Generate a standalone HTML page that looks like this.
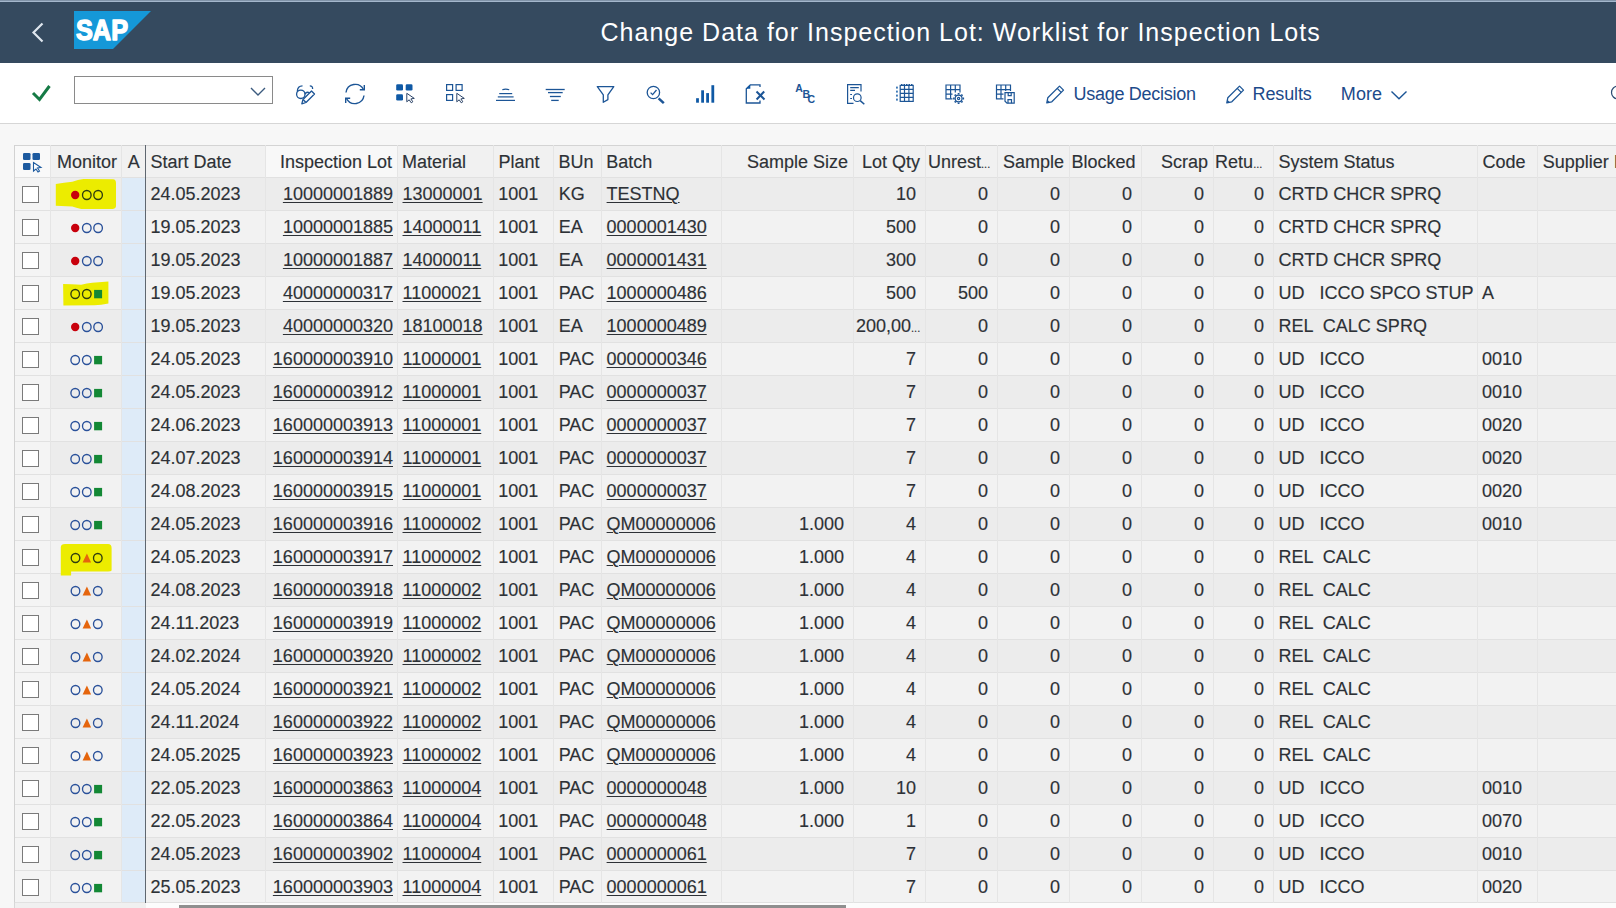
<!DOCTYPE html><html><head><meta charset="utf-8"><style>
*{margin:0;padding:0;box-sizing:border-box}
html,body{width:1616px;height:908px;overflow:hidden;background:#f7f7f7;font-family:"Liberation Sans", sans-serif;}
.a{position:absolute}
.t{position:absolute;font-size:18px;line-height:32px;height:32px;color:#2d3136;white-space:pre;-webkit-text-stroke:0.15px #2d3136}
.r{text-align:right}
.u{text-decoration:underline;text-underline-offset:2px;text-decoration-thickness:1px}
.h{line-height:31px;height:31px;top:147px}
.el{font-size:11px;letter-spacing:0px}
.tb{position:absolute;font-size:18px;color:#1c4a8a;white-space:pre;line-height:20px;}

</style></head><body>
<div class="a" style="left:0;top:0;width:1616px;height:1px;background:#8093a8"></div>
<div class="a" style="left:0;top:1px;width:1616px;height:1px;background:#a4b7cc"></div>
<div class="a" style="left:0;top:2px;width:1616px;height:61px;background:#354a5f"></div>
<svg class="a" style="left:0;top:0" width="200" height="62"><path d="M42.5 23.5 L33.5 32.5 L42.5 41.5" fill="none" stroke="#dfe6ee" stroke-width="2.2"/>
<path d="M74 11 H151 L113 49 H74 Z" fill="#1598d8"/>
<text x="76" y="40.3" font-family='"Liberation Sans", sans-serif' font-weight="bold" font-size="30" fill="#fff" stroke="#fff" stroke-width="1.5" stroke-linejoin="round" textLength="52" lengthAdjust="spacingAndGlyphs">SAP</text>
</svg>
<div class="a" style="left:600.5px;top:16px;font-size:25px;line-height:32px;color:#fff;letter-spacing:1.01px;white-space:pre">Change Data for Inspection Lot: Worklist for Inspection Lots</div>
<div class="a" style="left:0;top:63px;width:1616px;height:60px;background:#fff"></div>
<div class="a" style="left:0;top:123px;width:1616px;height:1px;background:#d6d6d6"></div>
<div class="a" style="left:74px;top:76px;width:199px;height:28px;border:1px solid #8a8a8a;background:#fff"></div>
<div class="tb" style="left:1073.5px;top:84px;letter-spacing:-0.28px">Usage Decision</div>
<div class="tb" style="left:1252.5px;top:84px;letter-spacing:-0.12px">Results</div>
<div class="tb" style="left:1340.8px;top:84px;letter-spacing:0.1px">More</div>

<svg class="a" style="left:0;top:0" width="1616" height="124">
<path d="M33 93 L39.5 99.5 L49.5 86" fill="none" stroke="#157a45" stroke-width="3"/>
<path d="M251 88 L258 95 L265 88" fill="none" stroke="#3b5a7e" stroke-width="1.4"/>
<!-- glasses pencil -->
<g fill="none" stroke="#1c5596" stroke-width="1.3">
<circle cx="300.8" cy="94.3" r="4.2"/><path d="M297.3 91.5 Q297.5 85.8 302.5 85.8"/><path d="M304.8 94.2 Q306.5 91.2 309.5 92.8"/><path d="M309.8 85.8 Q312.8 85.8 312.6 89"/>
<path d="M301.8 103.8 L303 99.5 L311.5 91 L314.5 94 L306 102.5 Z" stroke-linejoin="round"/><path d="M303.3 99.8 L305.8 102.3"/>
</g>
<!-- refresh -->
<g fill="none" stroke="#1c5596" stroke-width="1.4">
<path d="M346 92.5 A9.3 9.3 0 0 1 363.5 89.5"/><path d="M364 95.5 A9.3 9.3 0 0 1 346.5 98.5"/>
<path d="M359.8 89.8 L364.3 89.8 L364.3 85"/><path d="M350.2 98.2 L345.7 98.2 L345.7 103"/>
</g>
<!-- select all -->
<g fill="#0f59a5"><rect x="396.2" y="84.3" width="6.8" height="6.2" rx="1.3"/><rect x="405.7" y="84.3" width="6.8" height="6.2" rx="1.3"/><rect x="396.2" y="94.3" width="6.8" height="6.2" rx="1.3"/></g>
<path d="M406.8 93.3 L406.8 101.8 L409.2 99.8 L411.2 102.8 L412.8 101.8 L410.9 98.9 L414.3 98.4 Z" fill="#fff" stroke="#2c4468" stroke-width="1" stroke-linejoin="round"/>
<!-- deselect -->
<g fill="none" stroke="#1c5596" stroke-width="1.2"><rect x="446.6" y="84.6" width="6" height="5.8"/><rect x="456.1" y="84.6" width="6" height="5.8"/><rect x="446.6" y="94.6" width="6" height="5.8"/></g>
<path d="M456.8 93.3 L456.8 101.8 L459.2 99.8 L461.2 102.8 L462.8 101.8 L460.9 98.9 L464.3 98.4 Z" fill="#fff" stroke="#2c4468" stroke-width="1" stroke-linejoin="round"/>
<!-- align -->
<g fill="none" stroke="#1c5596" stroke-width="1.2"><path d="M502.3 89.8 Q505.7 88.6 509.2 89.8"/><path d="M499.2 93.6 H512.2"/><path d="M497.8 96.9 H513.6"/><path d="M496 100.4 H515"/></g>
<!-- sort -->
<g stroke="#1c5596" stroke-width="1.3"><path d="M545.7 89.5 H564.7"/><path d="M548 92.6 H562.7"/><path d="M549.9 96.5 H560.8"/><path d="M551.2 100.4 H558.7"/></g>
<!-- filter -->
<path d="M597.3 86.6 H613.8 L607.9 94.8 V99.6 L603.3 102.3 V94.8 Z" fill="none" stroke="#1c5596" stroke-width="1.3" stroke-linejoin="round"/>
<!-- find -->
<g fill="none" stroke="#1c5596"><circle cx="653.4" cy="92.5" r="6.2" stroke-width="1.3"/><path d="M650.6 92.6 L652.6 94.6 L656.5 90" stroke-width="1.3"/><path d="M658.6 98.3 L663.8 103.2" stroke-width="2.5"/></g>
<!-- bars -->
<g fill="#0f59a5"><rect x="696.1" y="98.2" width="2.8" height="4.5"/><rect x="701.2" y="90.3" width="2.8" height="12.4"/><rect x="706.2" y="93.1" width="2.8" height="9.6"/><rect x="711.4" y="85.2" width="2.8" height="17.5"/></g>
<!-- excel -->
<g fill="none" stroke="#1c5596" stroke-width="1.3"><path d="M760 87 V84.8 H750.3 L746.3 88.8 V103 H760 V100.5"/></g>
<path d="M746.3 88.8 L750.3 84.8 V88.8 Z" fill="#0f59a5"/>
<path d="M756.5 91.5 L764.5 99.5 M764.2 91.5 L756.6 99.5" stroke="#1c5596" stroke-width="2"/>
<!-- abc -->
<g font-family='"Liberation Sans", sans-serif' font-weight="bold" font-size="10.5" fill="#1c5596"><text x="795.2" y="92.3">A</text><text x="802.5" y="98.3">B</text><text x="807.6" y="103.4">C</text></g>
<!-- doc search -->
<g fill="none" stroke="#1c5596" stroke-width="1.2"><path d="M861 91.5 V84.6 H847.6 V103.3 H853.5"/><path d="M850.2 87.6 H858.8 M850.2 90.3 H855 M850.2 94.5 H852 M850.2 98.5 H852"/>
<circle cx="857.3" cy="97.7" r="3.8"/><path d="M860.2 100.6 L864.3 104.3" stroke-width="1.5"/></g>
<!-- grid -->
<g fill="none" stroke="#1c5596" stroke-width="1.2"><rect x="900.2" y="85.4" width="13" height="16"/><path d="M900.2 89.4 H913.2 M900.2 93.4 H913.2 M900.2 97.4 H913.2 M904.5 85.4 V101.4 M908.9 85.4 V101.4"/><path d="M901 84.6 H912.5" stroke-dasharray="1.5 1"/></g>
<g fill="#0f59a5"><rect x="896.2" y="86.6" width="1.5" height="2"/><rect x="896.2" y="90.6" width="1.5" height="2"/><rect x="896.2" y="94.6" width="1.5" height="2"/><rect x="896.2" y="98.6" width="1.5" height="2"/></g>
<!-- grid gear -->
<g fill="none" stroke="#1c5596" stroke-width="1.2"><path d="M952.5 98.8 H946 V85 H960 V92.5"/><path d="M946 89.6 H960 M946 94.2 H952.5 M950.6 85 V98.8 M955.3 85 V92.5"/>
<circle cx="958.6" cy="98.5" r="3.4"/><circle cx="958.6" cy="98.5" r="1.1"/></g>
<g stroke="#1c5596" stroke-width="1.8"><path d="M958.6 93 V94.6 M958.6 102.4 V104 M953.1 98.5 H954.7 M962.5 98.5 H964.1 M954.7 94.6 L955.8 95.7 M961.4 101.3 L962.5 102.4 M954.7 102.4 L955.8 101.3 M961.4 95.7 L962.5 94.6"/></g>
<!-- grid save -->
<g fill="none" stroke="#1c5596" stroke-width="1.2"><path d="M1003.5 98.8 H996.5 V85 H1010.5 V91"/><path d="M996.5 89.6 H1010.5 M996.5 94.2 H1003.5 M1001 85 V98.8 M1005.7 85 V91"/>
<path d="M1005 92.6 H1014.2 V103.2 H1007 L1005 101.2 Z"/><path d="M1008 103.2 V99.6 H1011.5 V103.2"/><path d="M1008.2 92.6 V95.6 H1011.2 V92.6"/></g>
<!-- pencil UD -->
<g fill="none" stroke="#1c5596" stroke-width="1.3" stroke-linejoin="round"><path d="M1046.8 102.8 L1047.8 97.8 L1059.5 86.1 L1063.5 90.1 L1051.8 101.8 Z"/><path d="M1057.2 88.4 L1061.2 92.4"/></g>
<path d="M1046.8 102.8 L1047.6 99.9 L1049.7 102 Z" fill="#1c5596"/>
<!-- pencil results -->
<g fill="none" stroke="#1c5596" stroke-width="1.3" stroke-linejoin="round"><path d="M1226.8 102.8 L1227.8 97.8 L1239.5 86.1 L1243.5 90.1 L1231.8 101.8 Z"/><path d="M1237.2 88.4 L1241.2 92.4"/></g>
<path d="M1226.8 102.8 L1227.6 99.9 L1229.7 102 Z" fill="#1c5596"/>
<!-- more chevron -->
<path d="M1391.5 91.5 L1399 98.8 L1406.5 91.5" fill="none" stroke="#1c5596" stroke-width="1.4"/>
<!-- partial circle right -->
<circle cx="1617.8" cy="92.5" r="6.3" fill="none" stroke="#2a4a72" stroke-width="1.2"/>
</svg>
<div class="a" style="left:14px;top:145px;width:1602px;height:758px;background:#f2f2f2"></div>
<div class="a" style="left:14px;top:145px;width:1602px;height:32px;background:#f1f1f1"></div>
<div class="a" style="left:15px;top:146px;width:35px;height:31px;background:#f9f9f9"></div>
<div class="a" style="left:266px;top:146px;width:131px;height:31px;background:#f8f8f8"></div>
<div class="a" style="left:51px;top:178px;width:1565px;height:32px;background:#ececec"></div>
<div class="a" style="left:15px;top:178px;width:35px;height:32px;background:#f4f4f4"></div>
<div class="a" style="left:122px;top:178px;width:23px;height:32px;background:#deebf8"></div>
<div class="a" style="left:51px;top:211px;width:1565px;height:32px;background:#f2f2f2"></div>
<div class="a" style="left:15px;top:211px;width:35px;height:32px;background:#f4f4f4"></div>
<div class="a" style="left:122px;top:211px;width:23px;height:32px;background:#deebf8"></div>
<div class="a" style="left:51px;top:244px;width:1565px;height:32px;background:#ececec"></div>
<div class="a" style="left:15px;top:244px;width:35px;height:32px;background:#f4f4f4"></div>
<div class="a" style="left:122px;top:244px;width:23px;height:32px;background:#deebf8"></div>
<div class="a" style="left:51px;top:277px;width:1565px;height:32px;background:#f2f2f2"></div>
<div class="a" style="left:15px;top:277px;width:35px;height:32px;background:#f4f4f4"></div>
<div class="a" style="left:122px;top:277px;width:23px;height:32px;background:#deebf8"></div>
<div class="a" style="left:51px;top:310px;width:1565px;height:32px;background:#ececec"></div>
<div class="a" style="left:15px;top:310px;width:35px;height:32px;background:#f4f4f4"></div>
<div class="a" style="left:122px;top:310px;width:23px;height:32px;background:#deebf8"></div>
<div class="a" style="left:51px;top:343px;width:1565px;height:32px;background:#f2f2f2"></div>
<div class="a" style="left:15px;top:343px;width:35px;height:32px;background:#f4f4f4"></div>
<div class="a" style="left:122px;top:343px;width:23px;height:32px;background:#deebf8"></div>
<div class="a" style="left:51px;top:376px;width:1565px;height:32px;background:#ececec"></div>
<div class="a" style="left:15px;top:376px;width:35px;height:32px;background:#f4f4f4"></div>
<div class="a" style="left:122px;top:376px;width:23px;height:32px;background:#deebf8"></div>
<div class="a" style="left:51px;top:409px;width:1565px;height:32px;background:#f2f2f2"></div>
<div class="a" style="left:15px;top:409px;width:35px;height:32px;background:#f4f4f4"></div>
<div class="a" style="left:122px;top:409px;width:23px;height:32px;background:#deebf8"></div>
<div class="a" style="left:51px;top:442px;width:1565px;height:32px;background:#ececec"></div>
<div class="a" style="left:15px;top:442px;width:35px;height:32px;background:#f4f4f4"></div>
<div class="a" style="left:122px;top:442px;width:23px;height:32px;background:#deebf8"></div>
<div class="a" style="left:51px;top:475px;width:1565px;height:32px;background:#f2f2f2"></div>
<div class="a" style="left:15px;top:475px;width:35px;height:32px;background:#f4f4f4"></div>
<div class="a" style="left:122px;top:475px;width:23px;height:32px;background:#deebf8"></div>
<div class="a" style="left:51px;top:508px;width:1565px;height:32px;background:#ececec"></div>
<div class="a" style="left:15px;top:508px;width:35px;height:32px;background:#f4f4f4"></div>
<div class="a" style="left:122px;top:508px;width:23px;height:32px;background:#deebf8"></div>
<div class="a" style="left:51px;top:541px;width:1565px;height:32px;background:#f2f2f2"></div>
<div class="a" style="left:15px;top:541px;width:35px;height:32px;background:#f4f4f4"></div>
<div class="a" style="left:122px;top:541px;width:23px;height:32px;background:#deebf8"></div>
<div class="a" style="left:51px;top:574px;width:1565px;height:32px;background:#ececec"></div>
<div class="a" style="left:15px;top:574px;width:35px;height:32px;background:#f4f4f4"></div>
<div class="a" style="left:122px;top:574px;width:23px;height:32px;background:#deebf8"></div>
<div class="a" style="left:51px;top:607px;width:1565px;height:32px;background:#f2f2f2"></div>
<div class="a" style="left:15px;top:607px;width:35px;height:32px;background:#f4f4f4"></div>
<div class="a" style="left:122px;top:607px;width:23px;height:32px;background:#deebf8"></div>
<div class="a" style="left:51px;top:640px;width:1565px;height:32px;background:#ececec"></div>
<div class="a" style="left:15px;top:640px;width:35px;height:32px;background:#f4f4f4"></div>
<div class="a" style="left:122px;top:640px;width:23px;height:32px;background:#deebf8"></div>
<div class="a" style="left:51px;top:673px;width:1565px;height:32px;background:#f2f2f2"></div>
<div class="a" style="left:15px;top:673px;width:35px;height:32px;background:#f4f4f4"></div>
<div class="a" style="left:122px;top:673px;width:23px;height:32px;background:#deebf8"></div>
<div class="a" style="left:51px;top:706px;width:1565px;height:32px;background:#ececec"></div>
<div class="a" style="left:15px;top:706px;width:35px;height:32px;background:#f4f4f4"></div>
<div class="a" style="left:122px;top:706px;width:23px;height:32px;background:#deebf8"></div>
<div class="a" style="left:51px;top:739px;width:1565px;height:32px;background:#f2f2f2"></div>
<div class="a" style="left:15px;top:739px;width:35px;height:32px;background:#f4f4f4"></div>
<div class="a" style="left:122px;top:739px;width:23px;height:32px;background:#deebf8"></div>
<div class="a" style="left:51px;top:772px;width:1565px;height:32px;background:#ececec"></div>
<div class="a" style="left:15px;top:772px;width:35px;height:32px;background:#f4f4f4"></div>
<div class="a" style="left:122px;top:772px;width:23px;height:32px;background:#deebf8"></div>
<div class="a" style="left:51px;top:805px;width:1565px;height:32px;background:#f2f2f2"></div>
<div class="a" style="left:15px;top:805px;width:35px;height:32px;background:#f4f4f4"></div>
<div class="a" style="left:122px;top:805px;width:23px;height:32px;background:#deebf8"></div>
<div class="a" style="left:51px;top:838px;width:1565px;height:32px;background:#ececec"></div>
<div class="a" style="left:15px;top:838px;width:35px;height:32px;background:#f4f4f4"></div>
<div class="a" style="left:122px;top:838px;width:23px;height:32px;background:#deebf8"></div>
<div class="a" style="left:51px;top:871px;width:1565px;height:32px;background:#f2f2f2"></div>
<div class="a" style="left:15px;top:871px;width:35px;height:32px;background:#f4f4f4"></div>
<div class="a" style="left:122px;top:871px;width:23px;height:32px;background:#deebf8"></div>
<div class="a" style="left:14px;top:177px;width:1602px;height:1px;background:#e1e1e1"></div>
<div class="a" style="left:14px;top:210px;width:1602px;height:1px;background:#e1e1e1"></div>
<div class="a" style="left:14px;top:243px;width:1602px;height:1px;background:#e1e1e1"></div>
<div class="a" style="left:14px;top:276px;width:1602px;height:1px;background:#e1e1e1"></div>
<div class="a" style="left:14px;top:309px;width:1602px;height:1px;background:#e1e1e1"></div>
<div class="a" style="left:14px;top:342px;width:1602px;height:1px;background:#e1e1e1"></div>
<div class="a" style="left:14px;top:375px;width:1602px;height:1px;background:#e1e1e1"></div>
<div class="a" style="left:14px;top:408px;width:1602px;height:1px;background:#e1e1e1"></div>
<div class="a" style="left:14px;top:441px;width:1602px;height:1px;background:#e1e1e1"></div>
<div class="a" style="left:14px;top:474px;width:1602px;height:1px;background:#e1e1e1"></div>
<div class="a" style="left:14px;top:507px;width:1602px;height:1px;background:#e1e1e1"></div>
<div class="a" style="left:14px;top:540px;width:1602px;height:1px;background:#e1e1e1"></div>
<div class="a" style="left:14px;top:573px;width:1602px;height:1px;background:#e1e1e1"></div>
<div class="a" style="left:14px;top:606px;width:1602px;height:1px;background:#e1e1e1"></div>
<div class="a" style="left:14px;top:639px;width:1602px;height:1px;background:#e1e1e1"></div>
<div class="a" style="left:14px;top:672px;width:1602px;height:1px;background:#e1e1e1"></div>
<div class="a" style="left:14px;top:705px;width:1602px;height:1px;background:#e1e1e1"></div>
<div class="a" style="left:14px;top:738px;width:1602px;height:1px;background:#e1e1e1"></div>
<div class="a" style="left:14px;top:771px;width:1602px;height:1px;background:#e1e1e1"></div>
<div class="a" style="left:14px;top:804px;width:1602px;height:1px;background:#e1e1e1"></div>
<div class="a" style="left:14px;top:837px;width:1602px;height:1px;background:#e1e1e1"></div>
<div class="a" style="left:14px;top:870px;width:1602px;height:1px;background:#e1e1e1"></div>
<div class="a" style="left:14px;top:902px;width:1602px;height:1px;background:#e1e1e1"></div>
<div class="a" style="left:14px;top:145px;width:1602px;height:1px;background:#d4d4d4"></div>
<div class="a" style="left:14px;top:145px;width:1px;height:758px;background:#d2d2d2"></div>
<div class="a" style="left:50px;top:145px;width:1px;height:758px;background:#e5e5e5"></div>
<div class="a" style="left:121px;top:145px;width:1px;height:758px;background:#e5e5e5"></div>
<div class="a" style="left:145px;top:145px;width:1px;height:758px;background:#5f6770"></div>
<div class="a" style="left:265px;top:145px;width:1px;height:758px;background:#e5e5e5"></div>
<div class="a" style="left:397px;top:145px;width:1px;height:758px;background:#e5e5e5"></div>
<div class="a" style="left:493px;top:145px;width:1px;height:758px;background:#e5e5e5"></div>
<div class="a" style="left:553px;top:145px;width:1px;height:758px;background:#e5e5e5"></div>
<div class="a" style="left:601px;top:145px;width:1px;height:758px;background:#e5e5e5"></div>
<div class="a" style="left:721px;top:145px;width:1px;height:758px;background:#e5e5e5"></div>
<div class="a" style="left:853px;top:145px;width:1px;height:758px;background:#e5e5e5"></div>
<div class="a" style="left:925px;top:145px;width:1px;height:758px;background:#e5e5e5"></div>
<div class="a" style="left:997px;top:145px;width:1px;height:758px;background:#e5e5e5"></div>
<div class="a" style="left:1069px;top:145px;width:1px;height:758px;background:#e5e5e5"></div>
<div class="a" style="left:1141px;top:145px;width:1px;height:758px;background:#e5e5e5"></div>
<div class="a" style="left:1213px;top:145px;width:1px;height:758px;background:#e5e5e5"></div>
<div class="a" style="left:1273px;top:145px;width:1px;height:758px;background:#e5e5e5"></div>
<div class="a" style="left:1477px;top:145px;width:1px;height:758px;background:#e5e5e5"></div>
<div class="a" style="left:1537px;top:145px;width:1px;height:758px;background:#e5e5e5"></div>
<div class="t h" style="left:57px">Monitor</div>
<div class="t h" style="left:127.7px">A</div>
<div class="t h" style="left:150.5px">Start Date</div>
<div class="t h r" style="left:266px;width:126px">Inspection Lot</div>
<div class="t h" style="left:402px">Material</div>
<div class="t h" style="left:498.4px">Plant</div>
<div class="t h" style="left:558.4px">BUn</div>
<div class="t h" style="left:606.2px">Batch</div>
<div class="t h r" style="left:722px;width:126px">Sample Size</div>
<div class="t h r" style="left:854px;width:66px">Lot Qty</div>
<div class="t h" style="left:928px">Unrest<span class="el">...</span></div>
<div class="t h r" style="left:998px;width:66px">Sample</div>
<div class="t h" style="left:1071.4px">Blocked</div>
<div class="t h r" style="left:1142px;width:66px">Scrap</div>
<div class="t h" style="left:1215.1px">Retu<span class="el">...</span></div>
<div class="t h" style="left:1278.5px">System Status</div>
<div class="t h" style="left:1482.6px">Code</div>
<div class="t h" style="left:1542.7px">Supplier I</div>
<svg class="a" style="left:0;top:140px" width="50" height="40"><g fill="#1d5a9f"><rect x="23" y="13" width="7.5" height="7" rx="1.3"/><rect x="32.5" y="13" width="7.5" height="7" rx="1.3"/><rect x="23" y="23" width="7.5" height="7" rx="1.3"/></g>
<path d="M33.5 22.5 L33.5 31 L36 29 L38 32 L39.5 31 L37.5 28 L41 27.5 Z" fill="#fff" stroke="#1d5a9f" stroke-width="1.1"/></svg>
<div class="a" style="left:22px;top:186px;width:17px;height:17px;border:1.5px solid #7a7a7a;background:#fff"></div>
<svg class="a" style="left:51px;top:178px;overflow:visible" width="70" height="40"><path d="M4.8 6.1 Q13 4.5 21.3 3.7 Q27 1.5 32.4 1 L62 1.2 Q65 1.5 65 5 L65 28.2 Q64.5 30.9 61.4 30.9 L30.2 30.9 Q25 30 21.3 28.6 L4.8 27.7 Z" fill="#ecec00"/><circle cx="24.2" cy="17" r="4.2" fill="#c8000c"/><ellipse cx="35.8" cy="17" rx="4.3" ry="4.5" fill="none" stroke="#2f3d10" stroke-width="1.35"/><ellipse cx="47.1" cy="17" rx="4.3" ry="4.5" fill="none" stroke="#2f3d10" stroke-width="1.35"/></svg>
<div class="t" style="left:150.5px;top:178px">24.05.2023</div>
<div class="t r" style="left:266px;top:178px;width:127px"><span class="u">10000001889</span></div>
<div class="t" style="left:402.5px;top:178px"><span class="u">13000001</span></div>
<div class="t" style="left:498.2px;top:178px">1001</div>
<div class="t" style="left:558.7px;top:178px">KG</div>
<div class="t" style="left:606.6px;top:178px"><span class="u">TESTNQ</span></div>
<div class="t r" style="left:854px;top:178px;width:62px">10</div>
<div class="t r" style="left:926px;top:178px;width:62px">0</div>
<div class="t r" style="left:998px;top:178px;width:62px">0</div>
<div class="t r" style="left:1070px;top:178px;width:62px">0</div>
<div class="t r" style="left:1142px;top:178px;width:62px">0</div>
<div class="t r" style="left:1214px;top:178px;width:50px">0</div>
<div class="t" style="left:1278.5px;top:178px">CRTD CHCR SPRQ</div>
<div class="a" style="left:22px;top:219px;width:17px;height:17px;border:1.5px solid #7a7a7a;background:#fff"></div>
<svg class="a" style="left:51px;top:211px;overflow:visible" width="70" height="40"><circle cx="24.2" cy="17" r="4.2" fill="#c8000c"/><ellipse cx="35.8" cy="17" rx="4.3" ry="4.5" fill="none" stroke="#2a519a" stroke-width="1.35"/><ellipse cx="47.1" cy="17" rx="4.3" ry="4.5" fill="none" stroke="#2a519a" stroke-width="1.35"/></svg>
<div class="t" style="left:150.5px;top:211px">19.05.2023</div>
<div class="t r" style="left:266px;top:211px;width:127px"><span class="u">10000001885</span></div>
<div class="t" style="left:402.5px;top:211px"><span class="u">14000011</span></div>
<div class="t" style="left:498.2px;top:211px">1001</div>
<div class="t" style="left:558.7px;top:211px">EA</div>
<div class="t" style="left:606.6px;top:211px"><span class="u">0000001430</span></div>
<div class="t r" style="left:854px;top:211px;width:62px">500</div>
<div class="t r" style="left:926px;top:211px;width:62px">0</div>
<div class="t r" style="left:998px;top:211px;width:62px">0</div>
<div class="t r" style="left:1070px;top:211px;width:62px">0</div>
<div class="t r" style="left:1142px;top:211px;width:62px">0</div>
<div class="t r" style="left:1214px;top:211px;width:50px">0</div>
<div class="t" style="left:1278.5px;top:211px">CRTD CHCR SPRQ</div>
<div class="a" style="left:22px;top:252px;width:17px;height:17px;border:1.5px solid #7a7a7a;background:#fff"></div>
<svg class="a" style="left:51px;top:244px;overflow:visible" width="70" height="40"><circle cx="24.2" cy="17" r="4.2" fill="#c8000c"/><ellipse cx="35.8" cy="17" rx="4.3" ry="4.5" fill="none" stroke="#2a519a" stroke-width="1.35"/><ellipse cx="47.1" cy="17" rx="4.3" ry="4.5" fill="none" stroke="#2a519a" stroke-width="1.35"/></svg>
<div class="t" style="left:150.5px;top:244px">19.05.2023</div>
<div class="t r" style="left:266px;top:244px;width:127px"><span class="u">10000001887</span></div>
<div class="t" style="left:402.5px;top:244px"><span class="u">14000011</span></div>
<div class="t" style="left:498.2px;top:244px">1001</div>
<div class="t" style="left:558.7px;top:244px">EA</div>
<div class="t" style="left:606.6px;top:244px"><span class="u">0000001431</span></div>
<div class="t r" style="left:854px;top:244px;width:62px">300</div>
<div class="t r" style="left:926px;top:244px;width:62px">0</div>
<div class="t r" style="left:998px;top:244px;width:62px">0</div>
<div class="t r" style="left:1070px;top:244px;width:62px">0</div>
<div class="t r" style="left:1142px;top:244px;width:62px">0</div>
<div class="t r" style="left:1214px;top:244px;width:50px">0</div>
<div class="t" style="left:1278.5px;top:244px">CRTD CHCR SPRQ</div>
<div class="a" style="left:22px;top:285px;width:17px;height:17px;border:1.5px solid #7a7a7a;background:#fff"></div>
<svg class="a" style="left:51px;top:277px;overflow:visible" width="70" height="40"><path d="M12.1 7 Q20 7.2 30.2 7.7 Q36 6 41.3 5.7 L57.4 4.6 L57.4 26.4 Q50 28 43.6 28.2 L12.4 28.6 Z" fill="#ecec00"/><ellipse cx="24.2" cy="17" rx="4.3" ry="4.5" fill="none" stroke="#2f3d10" stroke-width="1.35"/><ellipse cx="35.8" cy="17" rx="4.3" ry="4.5" fill="none" stroke="#2f3d10" stroke-width="1.35"/><rect x="43.1" y="12.9" width="8" height="8.4" fill="#138835"/></svg>
<div class="t" style="left:150.5px;top:277px">19.05.2023</div>
<div class="t r" style="left:266px;top:277px;width:127px"><span class="u">40000000317</span></div>
<div class="t" style="left:402.5px;top:277px"><span class="u">11000021</span></div>
<div class="t" style="left:498.2px;top:277px">1001</div>
<div class="t" style="left:558.7px;top:277px">PAC</div>
<div class="t" style="left:606.6px;top:277px"><span class="u">1000000486</span></div>
<div class="t r" style="left:854px;top:277px;width:62px">500</div>
<div class="t r" style="left:926px;top:277px;width:62px">500</div>
<div class="t r" style="left:998px;top:277px;width:62px">0</div>
<div class="t r" style="left:1070px;top:277px;width:62px">0</div>
<div class="t r" style="left:1142px;top:277px;width:62px">0</div>
<div class="t r" style="left:1214px;top:277px;width:50px">0</div>
<div class="t" style="left:1278.5px;top:277px">UD   ICCO SPCO STUP</div>
<div class="t" style="left:1482px;top:277px">A</div>
<div class="a" style="left:22px;top:318px;width:17px;height:17px;border:1.5px solid #7a7a7a;background:#fff"></div>
<svg class="a" style="left:51px;top:310px;overflow:visible" width="70" height="40"><circle cx="24.2" cy="17" r="4.2" fill="#c8000c"/><ellipse cx="35.8" cy="17" rx="4.3" ry="4.5" fill="none" stroke="#2a519a" stroke-width="1.35"/><ellipse cx="47.1" cy="17" rx="4.3" ry="4.5" fill="none" stroke="#2a519a" stroke-width="1.35"/></svg>
<div class="t" style="left:150.5px;top:310px">19.05.2023</div>
<div class="t r" style="left:266px;top:310px;width:127px"><span class="u">40000000320</span></div>
<div class="t" style="left:402.5px;top:310px"><span class="u">18100018</span></div>
<div class="t" style="left:498.2px;top:310px">1001</div>
<div class="t" style="left:558.7px;top:310px">EA</div>
<div class="t" style="left:606.6px;top:310px"><span class="u">1000000489</span></div>
<div class="t" style="left:856px;top:310px">200,00<span class="el">...</span></div>
<div class="t r" style="left:926px;top:310px;width:62px">0</div>
<div class="t r" style="left:998px;top:310px;width:62px">0</div>
<div class="t r" style="left:1070px;top:310px;width:62px">0</div>
<div class="t r" style="left:1142px;top:310px;width:62px">0</div>
<div class="t r" style="left:1214px;top:310px;width:50px">0</div>
<div class="t" style="left:1278.5px;top:310px">REL  CALC SPRQ</div>
<div class="a" style="left:22px;top:351px;width:17px;height:17px;border:1.5px solid #7a7a7a;background:#fff"></div>
<svg class="a" style="left:51px;top:343px;overflow:visible" width="70" height="40"><ellipse cx="24.2" cy="17" rx="4.3" ry="4.5" fill="none" stroke="#2a519a" stroke-width="1.35"/><ellipse cx="35.8" cy="17" rx="4.3" ry="4.5" fill="none" stroke="#2a519a" stroke-width="1.35"/><rect x="43.1" y="12.9" width="8" height="8.4" fill="#138835"/></svg>
<div class="t" style="left:150.5px;top:343px">24.05.2023</div>
<div class="t r" style="left:266px;top:343px;width:127px"><span class="u">160000003910</span></div>
<div class="t" style="left:402.5px;top:343px"><span class="u">11000001</span></div>
<div class="t" style="left:498.2px;top:343px">1001</div>
<div class="t" style="left:558.7px;top:343px">PAC</div>
<div class="t" style="left:606.6px;top:343px"><span class="u">0000000346</span></div>
<div class="t r" style="left:854px;top:343px;width:62px">7</div>
<div class="t r" style="left:926px;top:343px;width:62px">0</div>
<div class="t r" style="left:998px;top:343px;width:62px">0</div>
<div class="t r" style="left:1070px;top:343px;width:62px">0</div>
<div class="t r" style="left:1142px;top:343px;width:62px">0</div>
<div class="t r" style="left:1214px;top:343px;width:50px">0</div>
<div class="t" style="left:1278.5px;top:343px">UD   ICCO</div>
<div class="t" style="left:1482px;top:343px">0010</div>
<div class="a" style="left:22px;top:384px;width:17px;height:17px;border:1.5px solid #7a7a7a;background:#fff"></div>
<svg class="a" style="left:51px;top:376px;overflow:visible" width="70" height="40"><ellipse cx="24.2" cy="17" rx="4.3" ry="4.5" fill="none" stroke="#2a519a" stroke-width="1.35"/><ellipse cx="35.8" cy="17" rx="4.3" ry="4.5" fill="none" stroke="#2a519a" stroke-width="1.35"/><rect x="43.1" y="12.9" width="8" height="8.4" fill="#138835"/></svg>
<div class="t" style="left:150.5px;top:376px">24.05.2023</div>
<div class="t r" style="left:266px;top:376px;width:127px"><span class="u">160000003912</span></div>
<div class="t" style="left:402.5px;top:376px"><span class="u">11000001</span></div>
<div class="t" style="left:498.2px;top:376px">1001</div>
<div class="t" style="left:558.7px;top:376px">PAC</div>
<div class="t" style="left:606.6px;top:376px"><span class="u">0000000037</span></div>
<div class="t r" style="left:854px;top:376px;width:62px">7</div>
<div class="t r" style="left:926px;top:376px;width:62px">0</div>
<div class="t r" style="left:998px;top:376px;width:62px">0</div>
<div class="t r" style="left:1070px;top:376px;width:62px">0</div>
<div class="t r" style="left:1142px;top:376px;width:62px">0</div>
<div class="t r" style="left:1214px;top:376px;width:50px">0</div>
<div class="t" style="left:1278.5px;top:376px">UD   ICCO</div>
<div class="t" style="left:1482px;top:376px">0010</div>
<div class="a" style="left:22px;top:417px;width:17px;height:17px;border:1.5px solid #7a7a7a;background:#fff"></div>
<svg class="a" style="left:51px;top:409px;overflow:visible" width="70" height="40"><ellipse cx="24.2" cy="17" rx="4.3" ry="4.5" fill="none" stroke="#2a519a" stroke-width="1.35"/><ellipse cx="35.8" cy="17" rx="4.3" ry="4.5" fill="none" stroke="#2a519a" stroke-width="1.35"/><rect x="43.1" y="12.9" width="8" height="8.4" fill="#138835"/></svg>
<div class="t" style="left:150.5px;top:409px">24.06.2023</div>
<div class="t r" style="left:266px;top:409px;width:127px"><span class="u">160000003913</span></div>
<div class="t" style="left:402.5px;top:409px"><span class="u">11000001</span></div>
<div class="t" style="left:498.2px;top:409px">1001</div>
<div class="t" style="left:558.7px;top:409px">PAC</div>
<div class="t" style="left:606.6px;top:409px"><span class="u">0000000037</span></div>
<div class="t r" style="left:854px;top:409px;width:62px">7</div>
<div class="t r" style="left:926px;top:409px;width:62px">0</div>
<div class="t r" style="left:998px;top:409px;width:62px">0</div>
<div class="t r" style="left:1070px;top:409px;width:62px">0</div>
<div class="t r" style="left:1142px;top:409px;width:62px">0</div>
<div class="t r" style="left:1214px;top:409px;width:50px">0</div>
<div class="t" style="left:1278.5px;top:409px">UD   ICCO</div>
<div class="t" style="left:1482px;top:409px">0020</div>
<div class="a" style="left:22px;top:450px;width:17px;height:17px;border:1.5px solid #7a7a7a;background:#fff"></div>
<svg class="a" style="left:51px;top:442px;overflow:visible" width="70" height="40"><ellipse cx="24.2" cy="17" rx="4.3" ry="4.5" fill="none" stroke="#2a519a" stroke-width="1.35"/><ellipse cx="35.8" cy="17" rx="4.3" ry="4.5" fill="none" stroke="#2a519a" stroke-width="1.35"/><rect x="43.1" y="12.9" width="8" height="8.4" fill="#138835"/></svg>
<div class="t" style="left:150.5px;top:442px">24.07.2023</div>
<div class="t r" style="left:266px;top:442px;width:127px"><span class="u">160000003914</span></div>
<div class="t" style="left:402.5px;top:442px"><span class="u">11000001</span></div>
<div class="t" style="left:498.2px;top:442px">1001</div>
<div class="t" style="left:558.7px;top:442px">PAC</div>
<div class="t" style="left:606.6px;top:442px"><span class="u">0000000037</span></div>
<div class="t r" style="left:854px;top:442px;width:62px">7</div>
<div class="t r" style="left:926px;top:442px;width:62px">0</div>
<div class="t r" style="left:998px;top:442px;width:62px">0</div>
<div class="t r" style="left:1070px;top:442px;width:62px">0</div>
<div class="t r" style="left:1142px;top:442px;width:62px">0</div>
<div class="t r" style="left:1214px;top:442px;width:50px">0</div>
<div class="t" style="left:1278.5px;top:442px">UD   ICCO</div>
<div class="t" style="left:1482px;top:442px">0020</div>
<div class="a" style="left:22px;top:483px;width:17px;height:17px;border:1.5px solid #7a7a7a;background:#fff"></div>
<svg class="a" style="left:51px;top:475px;overflow:visible" width="70" height="40"><ellipse cx="24.2" cy="17" rx="4.3" ry="4.5" fill="none" stroke="#2a519a" stroke-width="1.35"/><ellipse cx="35.8" cy="17" rx="4.3" ry="4.5" fill="none" stroke="#2a519a" stroke-width="1.35"/><rect x="43.1" y="12.9" width="8" height="8.4" fill="#138835"/></svg>
<div class="t" style="left:150.5px;top:475px">24.08.2023</div>
<div class="t r" style="left:266px;top:475px;width:127px"><span class="u">160000003915</span></div>
<div class="t" style="left:402.5px;top:475px"><span class="u">11000001</span></div>
<div class="t" style="left:498.2px;top:475px">1001</div>
<div class="t" style="left:558.7px;top:475px">PAC</div>
<div class="t" style="left:606.6px;top:475px"><span class="u">0000000037</span></div>
<div class="t r" style="left:854px;top:475px;width:62px">7</div>
<div class="t r" style="left:926px;top:475px;width:62px">0</div>
<div class="t r" style="left:998px;top:475px;width:62px">0</div>
<div class="t r" style="left:1070px;top:475px;width:62px">0</div>
<div class="t r" style="left:1142px;top:475px;width:62px">0</div>
<div class="t r" style="left:1214px;top:475px;width:50px">0</div>
<div class="t" style="left:1278.5px;top:475px">UD   ICCO</div>
<div class="t" style="left:1482px;top:475px">0020</div>
<div class="a" style="left:22px;top:516px;width:17px;height:17px;border:1.5px solid #7a7a7a;background:#fff"></div>
<svg class="a" style="left:51px;top:508px;overflow:visible" width="70" height="40"><ellipse cx="24.2" cy="17" rx="4.3" ry="4.5" fill="none" stroke="#2a519a" stroke-width="1.35"/><ellipse cx="35.8" cy="17" rx="4.3" ry="4.5" fill="none" stroke="#2a519a" stroke-width="1.35"/><rect x="43.1" y="12.9" width="8" height="8.4" fill="#138835"/></svg>
<div class="t" style="left:150.5px;top:508px">24.05.2023</div>
<div class="t r" style="left:266px;top:508px;width:127px"><span class="u">160000003916</span></div>
<div class="t" style="left:402.5px;top:508px"><span class="u">11000002</span></div>
<div class="t" style="left:498.2px;top:508px">1001</div>
<div class="t" style="left:558.7px;top:508px">PAC</div>
<div class="t" style="left:606.6px;top:508px"><span class="u">QM00000006</span></div>
<div class="t r" style="left:722px;top:508px;width:122px">1.000</div>
<div class="t r" style="left:854px;top:508px;width:62px">4</div>
<div class="t r" style="left:926px;top:508px;width:62px">0</div>
<div class="t r" style="left:998px;top:508px;width:62px">0</div>
<div class="t r" style="left:1070px;top:508px;width:62px">0</div>
<div class="t r" style="left:1142px;top:508px;width:62px">0</div>
<div class="t r" style="left:1214px;top:508px;width:50px">0</div>
<div class="t" style="left:1278.5px;top:508px">UD   ICCO</div>
<div class="t" style="left:1482px;top:508px">0010</div>
<div class="a" style="left:22px;top:549px;width:17px;height:17px;border:1.5px solid #7a7a7a;background:#fff"></div>
<svg class="a" style="left:51px;top:541px;overflow:visible" width="70" height="40"><path d="M9.8 6 Q10 3 14 3 L57 3 Q60.6 3 60.6 7 L60.6 29.5 Q60 30.4 57 30.4 L20.1 30.4 L20.1 34.5 L9.8 34.5 Z" fill="#ecec00"/><ellipse cx="24.5" cy="17" rx="4.3" ry="4.5" fill="none" stroke="#2f3d10" stroke-width="1.35"/><path d="M35.9 12.5 L40.1 21.6 L31.6 21.6 Z" fill="#e5650d"/><ellipse cx="46.8" cy="17" rx="4.3" ry="4.5" fill="none" stroke="#2f3d10" stroke-width="1.35"/></svg>
<div class="t" style="left:150.5px;top:541px">24.05.2023</div>
<div class="t r" style="left:266px;top:541px;width:127px"><span class="u">160000003917</span></div>
<div class="t" style="left:402.5px;top:541px"><span class="u">11000002</span></div>
<div class="t" style="left:498.2px;top:541px">1001</div>
<div class="t" style="left:558.7px;top:541px">PAC</div>
<div class="t" style="left:606.6px;top:541px"><span class="u">QM00000006</span></div>
<div class="t r" style="left:722px;top:541px;width:122px">1.000</div>
<div class="t r" style="left:854px;top:541px;width:62px">4</div>
<div class="t r" style="left:926px;top:541px;width:62px">0</div>
<div class="t r" style="left:998px;top:541px;width:62px">0</div>
<div class="t r" style="left:1070px;top:541px;width:62px">0</div>
<div class="t r" style="left:1142px;top:541px;width:62px">0</div>
<div class="t r" style="left:1214px;top:541px;width:50px">0</div>
<div class="t" style="left:1278.5px;top:541px">REL  CALC</div>
<div class="a" style="left:22px;top:582px;width:17px;height:17px;border:1.5px solid #7a7a7a;background:#fff"></div>
<svg class="a" style="left:51px;top:574px;overflow:visible" width="70" height="40"><ellipse cx="24.5" cy="17" rx="4.3" ry="4.5" fill="none" stroke="#2a519a" stroke-width="1.35"/><path d="M35.9 12.5 L40.1 21.6 L31.6 21.6 Z" fill="#e5650d"/><ellipse cx="46.8" cy="17" rx="4.3" ry="4.5" fill="none" stroke="#2a519a" stroke-width="1.35"/></svg>
<div class="t" style="left:150.5px;top:574px">24.08.2023</div>
<div class="t r" style="left:266px;top:574px;width:127px"><span class="u">160000003918</span></div>
<div class="t" style="left:402.5px;top:574px"><span class="u">11000002</span></div>
<div class="t" style="left:498.2px;top:574px">1001</div>
<div class="t" style="left:558.7px;top:574px">PAC</div>
<div class="t" style="left:606.6px;top:574px"><span class="u">QM00000006</span></div>
<div class="t r" style="left:722px;top:574px;width:122px">1.000</div>
<div class="t r" style="left:854px;top:574px;width:62px">4</div>
<div class="t r" style="left:926px;top:574px;width:62px">0</div>
<div class="t r" style="left:998px;top:574px;width:62px">0</div>
<div class="t r" style="left:1070px;top:574px;width:62px">0</div>
<div class="t r" style="left:1142px;top:574px;width:62px">0</div>
<div class="t r" style="left:1214px;top:574px;width:50px">0</div>
<div class="t" style="left:1278.5px;top:574px">REL  CALC</div>
<div class="a" style="left:22px;top:615px;width:17px;height:17px;border:1.5px solid #7a7a7a;background:#fff"></div>
<svg class="a" style="left:51px;top:607px;overflow:visible" width="70" height="40"><ellipse cx="24.5" cy="17" rx="4.3" ry="4.5" fill="none" stroke="#2a519a" stroke-width="1.35"/><path d="M35.9 12.5 L40.1 21.6 L31.6 21.6 Z" fill="#e5650d"/><ellipse cx="46.8" cy="17" rx="4.3" ry="4.5" fill="none" stroke="#2a519a" stroke-width="1.35"/></svg>
<div class="t" style="left:150.5px;top:607px">24.11.2023</div>
<div class="t r" style="left:266px;top:607px;width:127px"><span class="u">160000003919</span></div>
<div class="t" style="left:402.5px;top:607px"><span class="u">11000002</span></div>
<div class="t" style="left:498.2px;top:607px">1001</div>
<div class="t" style="left:558.7px;top:607px">PAC</div>
<div class="t" style="left:606.6px;top:607px"><span class="u">QM00000006</span></div>
<div class="t r" style="left:722px;top:607px;width:122px">1.000</div>
<div class="t r" style="left:854px;top:607px;width:62px">4</div>
<div class="t r" style="left:926px;top:607px;width:62px">0</div>
<div class="t r" style="left:998px;top:607px;width:62px">0</div>
<div class="t r" style="left:1070px;top:607px;width:62px">0</div>
<div class="t r" style="left:1142px;top:607px;width:62px">0</div>
<div class="t r" style="left:1214px;top:607px;width:50px">0</div>
<div class="t" style="left:1278.5px;top:607px">REL  CALC</div>
<div class="a" style="left:22px;top:648px;width:17px;height:17px;border:1.5px solid #7a7a7a;background:#fff"></div>
<svg class="a" style="left:51px;top:640px;overflow:visible" width="70" height="40"><ellipse cx="24.5" cy="17" rx="4.3" ry="4.5" fill="none" stroke="#2a519a" stroke-width="1.35"/><path d="M35.9 12.5 L40.1 21.6 L31.6 21.6 Z" fill="#e5650d"/><ellipse cx="46.8" cy="17" rx="4.3" ry="4.5" fill="none" stroke="#2a519a" stroke-width="1.35"/></svg>
<div class="t" style="left:150.5px;top:640px">24.02.2024</div>
<div class="t r" style="left:266px;top:640px;width:127px"><span class="u">160000003920</span></div>
<div class="t" style="left:402.5px;top:640px"><span class="u">11000002</span></div>
<div class="t" style="left:498.2px;top:640px">1001</div>
<div class="t" style="left:558.7px;top:640px">PAC</div>
<div class="t" style="left:606.6px;top:640px"><span class="u">QM00000006</span></div>
<div class="t r" style="left:722px;top:640px;width:122px">1.000</div>
<div class="t r" style="left:854px;top:640px;width:62px">4</div>
<div class="t r" style="left:926px;top:640px;width:62px">0</div>
<div class="t r" style="left:998px;top:640px;width:62px">0</div>
<div class="t r" style="left:1070px;top:640px;width:62px">0</div>
<div class="t r" style="left:1142px;top:640px;width:62px">0</div>
<div class="t r" style="left:1214px;top:640px;width:50px">0</div>
<div class="t" style="left:1278.5px;top:640px">REL  CALC</div>
<div class="a" style="left:22px;top:681px;width:17px;height:17px;border:1.5px solid #7a7a7a;background:#fff"></div>
<svg class="a" style="left:51px;top:673px;overflow:visible" width="70" height="40"><ellipse cx="24.5" cy="17" rx="4.3" ry="4.5" fill="none" stroke="#2a519a" stroke-width="1.35"/><path d="M35.9 12.5 L40.1 21.6 L31.6 21.6 Z" fill="#e5650d"/><ellipse cx="46.8" cy="17" rx="4.3" ry="4.5" fill="none" stroke="#2a519a" stroke-width="1.35"/></svg>
<div class="t" style="left:150.5px;top:673px">24.05.2024</div>
<div class="t r" style="left:266px;top:673px;width:127px"><span class="u">160000003921</span></div>
<div class="t" style="left:402.5px;top:673px"><span class="u">11000002</span></div>
<div class="t" style="left:498.2px;top:673px">1001</div>
<div class="t" style="left:558.7px;top:673px">PAC</div>
<div class="t" style="left:606.6px;top:673px"><span class="u">QM00000006</span></div>
<div class="t r" style="left:722px;top:673px;width:122px">1.000</div>
<div class="t r" style="left:854px;top:673px;width:62px">4</div>
<div class="t r" style="left:926px;top:673px;width:62px">0</div>
<div class="t r" style="left:998px;top:673px;width:62px">0</div>
<div class="t r" style="left:1070px;top:673px;width:62px">0</div>
<div class="t r" style="left:1142px;top:673px;width:62px">0</div>
<div class="t r" style="left:1214px;top:673px;width:50px">0</div>
<div class="t" style="left:1278.5px;top:673px">REL  CALC</div>
<div class="a" style="left:22px;top:714px;width:17px;height:17px;border:1.5px solid #7a7a7a;background:#fff"></div>
<svg class="a" style="left:51px;top:706px;overflow:visible" width="70" height="40"><ellipse cx="24.5" cy="17" rx="4.3" ry="4.5" fill="none" stroke="#2a519a" stroke-width="1.35"/><path d="M35.9 12.5 L40.1 21.6 L31.6 21.6 Z" fill="#e5650d"/><ellipse cx="46.8" cy="17" rx="4.3" ry="4.5" fill="none" stroke="#2a519a" stroke-width="1.35"/></svg>
<div class="t" style="left:150.5px;top:706px">24.11.2024</div>
<div class="t r" style="left:266px;top:706px;width:127px"><span class="u">160000003922</span></div>
<div class="t" style="left:402.5px;top:706px"><span class="u">11000002</span></div>
<div class="t" style="left:498.2px;top:706px">1001</div>
<div class="t" style="left:558.7px;top:706px">PAC</div>
<div class="t" style="left:606.6px;top:706px"><span class="u">QM00000006</span></div>
<div class="t r" style="left:722px;top:706px;width:122px">1.000</div>
<div class="t r" style="left:854px;top:706px;width:62px">4</div>
<div class="t r" style="left:926px;top:706px;width:62px">0</div>
<div class="t r" style="left:998px;top:706px;width:62px">0</div>
<div class="t r" style="left:1070px;top:706px;width:62px">0</div>
<div class="t r" style="left:1142px;top:706px;width:62px">0</div>
<div class="t r" style="left:1214px;top:706px;width:50px">0</div>
<div class="t" style="left:1278.5px;top:706px">REL  CALC</div>
<div class="a" style="left:22px;top:747px;width:17px;height:17px;border:1.5px solid #7a7a7a;background:#fff"></div>
<svg class="a" style="left:51px;top:739px;overflow:visible" width="70" height="40"><ellipse cx="24.5" cy="17" rx="4.3" ry="4.5" fill="none" stroke="#2a519a" stroke-width="1.35"/><path d="M35.9 12.5 L40.1 21.6 L31.6 21.6 Z" fill="#e5650d"/><ellipse cx="46.8" cy="17" rx="4.3" ry="4.5" fill="none" stroke="#2a519a" stroke-width="1.35"/></svg>
<div class="t" style="left:150.5px;top:739px">24.05.2025</div>
<div class="t r" style="left:266px;top:739px;width:127px"><span class="u">160000003923</span></div>
<div class="t" style="left:402.5px;top:739px"><span class="u">11000002</span></div>
<div class="t" style="left:498.2px;top:739px">1001</div>
<div class="t" style="left:558.7px;top:739px">PAC</div>
<div class="t" style="left:606.6px;top:739px"><span class="u">QM00000006</span></div>
<div class="t r" style="left:722px;top:739px;width:122px">1.000</div>
<div class="t r" style="left:854px;top:739px;width:62px">4</div>
<div class="t r" style="left:926px;top:739px;width:62px">0</div>
<div class="t r" style="left:998px;top:739px;width:62px">0</div>
<div class="t r" style="left:1070px;top:739px;width:62px">0</div>
<div class="t r" style="left:1142px;top:739px;width:62px">0</div>
<div class="t r" style="left:1214px;top:739px;width:50px">0</div>
<div class="t" style="left:1278.5px;top:739px">REL  CALC</div>
<div class="a" style="left:22px;top:780px;width:17px;height:17px;border:1.5px solid #7a7a7a;background:#fff"></div>
<svg class="a" style="left:51px;top:772px;overflow:visible" width="70" height="40"><ellipse cx="24.2" cy="17" rx="4.3" ry="4.5" fill="none" stroke="#2a519a" stroke-width="1.35"/><ellipse cx="35.8" cy="17" rx="4.3" ry="4.5" fill="none" stroke="#2a519a" stroke-width="1.35"/><rect x="43.1" y="12.9" width="8" height="8.4" fill="#138835"/></svg>
<div class="t" style="left:150.5px;top:772px">22.05.2023</div>
<div class="t r" style="left:266px;top:772px;width:127px"><span class="u">160000003863</span></div>
<div class="t" style="left:402.5px;top:772px"><span class="u">11000004</span></div>
<div class="t" style="left:498.2px;top:772px">1001</div>
<div class="t" style="left:558.7px;top:772px">PAC</div>
<div class="t" style="left:606.6px;top:772px"><span class="u">0000000048</span></div>
<div class="t r" style="left:722px;top:772px;width:122px">1.000</div>
<div class="t r" style="left:854px;top:772px;width:62px">10</div>
<div class="t r" style="left:926px;top:772px;width:62px">0</div>
<div class="t r" style="left:998px;top:772px;width:62px">0</div>
<div class="t r" style="left:1070px;top:772px;width:62px">0</div>
<div class="t r" style="left:1142px;top:772px;width:62px">0</div>
<div class="t r" style="left:1214px;top:772px;width:50px">0</div>
<div class="t" style="left:1278.5px;top:772px">UD   ICCO</div>
<div class="t" style="left:1482px;top:772px">0010</div>
<div class="a" style="left:22px;top:813px;width:17px;height:17px;border:1.5px solid #7a7a7a;background:#fff"></div>
<svg class="a" style="left:51px;top:805px;overflow:visible" width="70" height="40"><ellipse cx="24.2" cy="17" rx="4.3" ry="4.5" fill="none" stroke="#2a519a" stroke-width="1.35"/><ellipse cx="35.8" cy="17" rx="4.3" ry="4.5" fill="none" stroke="#2a519a" stroke-width="1.35"/><rect x="43.1" y="12.9" width="8" height="8.4" fill="#138835"/></svg>
<div class="t" style="left:150.5px;top:805px">22.05.2023</div>
<div class="t r" style="left:266px;top:805px;width:127px"><span class="u">160000003864</span></div>
<div class="t" style="left:402.5px;top:805px"><span class="u">11000004</span></div>
<div class="t" style="left:498.2px;top:805px">1001</div>
<div class="t" style="left:558.7px;top:805px">PAC</div>
<div class="t" style="left:606.6px;top:805px"><span class="u">0000000048</span></div>
<div class="t r" style="left:722px;top:805px;width:122px">1.000</div>
<div class="t r" style="left:854px;top:805px;width:62px">1</div>
<div class="t r" style="left:926px;top:805px;width:62px">0</div>
<div class="t r" style="left:998px;top:805px;width:62px">0</div>
<div class="t r" style="left:1070px;top:805px;width:62px">0</div>
<div class="t r" style="left:1142px;top:805px;width:62px">0</div>
<div class="t r" style="left:1214px;top:805px;width:50px">0</div>
<div class="t" style="left:1278.5px;top:805px">UD   ICCO</div>
<div class="t" style="left:1482px;top:805px">0070</div>
<div class="a" style="left:22px;top:846px;width:17px;height:17px;border:1.5px solid #7a7a7a;background:#fff"></div>
<svg class="a" style="left:51px;top:838px;overflow:visible" width="70" height="40"><ellipse cx="24.2" cy="17" rx="4.3" ry="4.5" fill="none" stroke="#2a519a" stroke-width="1.35"/><ellipse cx="35.8" cy="17" rx="4.3" ry="4.5" fill="none" stroke="#2a519a" stroke-width="1.35"/><rect x="43.1" y="12.9" width="8" height="8.4" fill="#138835"/></svg>
<div class="t" style="left:150.5px;top:838px">24.05.2023</div>
<div class="t r" style="left:266px;top:838px;width:127px"><span class="u">160000003902</span></div>
<div class="t" style="left:402.5px;top:838px"><span class="u">11000004</span></div>
<div class="t" style="left:498.2px;top:838px">1001</div>
<div class="t" style="left:558.7px;top:838px">PAC</div>
<div class="t" style="left:606.6px;top:838px"><span class="u">0000000061</span></div>
<div class="t r" style="left:854px;top:838px;width:62px">7</div>
<div class="t r" style="left:926px;top:838px;width:62px">0</div>
<div class="t r" style="left:998px;top:838px;width:62px">0</div>
<div class="t r" style="left:1070px;top:838px;width:62px">0</div>
<div class="t r" style="left:1142px;top:838px;width:62px">0</div>
<div class="t r" style="left:1214px;top:838px;width:50px">0</div>
<div class="t" style="left:1278.5px;top:838px">UD   ICCO</div>
<div class="t" style="left:1482px;top:838px">0010</div>
<div class="a" style="left:22px;top:879px;width:17px;height:17px;border:1.5px solid #7a7a7a;background:#fff"></div>
<svg class="a" style="left:51px;top:871px;overflow:visible" width="70" height="40"><ellipse cx="24.2" cy="17" rx="4.3" ry="4.5" fill="none" stroke="#2a519a" stroke-width="1.35"/><ellipse cx="35.8" cy="17" rx="4.3" ry="4.5" fill="none" stroke="#2a519a" stroke-width="1.35"/><rect x="43.1" y="12.9" width="8" height="8.4" fill="#138835"/></svg>
<div class="t" style="left:150.5px;top:871px">25.05.2023</div>
<div class="t r" style="left:266px;top:871px;width:127px"><span class="u">160000003903</span></div>
<div class="t" style="left:402.5px;top:871px"><span class="u">11000004</span></div>
<div class="t" style="left:498.2px;top:871px">1001</div>
<div class="t" style="left:558.7px;top:871px">PAC</div>
<div class="t" style="left:606.6px;top:871px"><span class="u">0000000061</span></div>
<div class="t r" style="left:854px;top:871px;width:62px">7</div>
<div class="t r" style="left:926px;top:871px;width:62px">0</div>
<div class="t r" style="left:998px;top:871px;width:62px">0</div>
<div class="t r" style="left:1070px;top:871px;width:62px">0</div>
<div class="t r" style="left:1142px;top:871px;width:62px">0</div>
<div class="t r" style="left:1214px;top:871px;width:50px">0</div>
<div class="t" style="left:1278.5px;top:871px">UD   ICCO</div>
<div class="t" style="left:1482px;top:871px">0020</div>
<div class="a" style="left:0;top:903px;width:14px;height:5px;background:#f7f7f7"></div>
<div class="a" style="left:14px;top:903px;width:132px;height:5px;background:#f0f0f0"></div>
<div class="a" style="left:146px;top:903px;width:1470px;height:5px;background:#fcfcfc"></div>
<div class="a" style="left:14px;top:902px;width:1px;height:6px;background:#d8d8d8"></div>
<div class="a" style="left:179px;top:905px;width:667px;height:3px;background:#8f8f8f"></div>
</body></html>
